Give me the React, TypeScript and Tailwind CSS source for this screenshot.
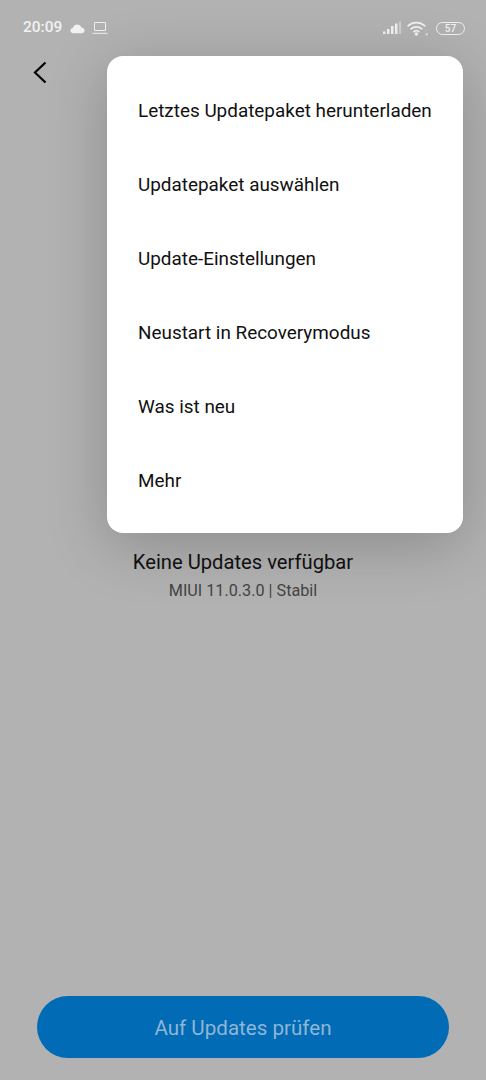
const menuItems = [
  'Letztes Updatepaket herunterladen',
  'Updatepaket auswählen',
  'Update-Einstellungen',
  'Neustart in Recoverymodus',
  'Was ist neu',
  'Mehr',
];

function CloudIcon() {
  return (
    <svg width="15" height="11" viewBox="0 0 15 11" fill="#f1f1f1">
      <path d="M3.3 10.2C1.5 10.2.4 9 .4 7.6c0-1.3 1-2.4 2.4-2.6C3.2 3 5 1.4 7.2 1.4c2 0 3.6 1.2 4.2 3.1 1.8.1 3.2 1.4 3.2 3 0 1.500-1.200 2.700-3 2.700z" />
    </svg>
  );
}

function LaptopIcon() {
  return (
    <svg width="16" height="12" viewBox="0 0 16 12" fill="none" stroke="#f1f1f1" strokeWidth="1">
      <rect x="2.500" y="0.500" width="11" height="8" rx="0.500" />
      <path d="M0.500 11.300h15" />
    </svg>
  );
}

function SignalIcon() {
  return (
    <svg width="19" height="14" viewBox="0 0 19 14" fill="#f1f1f1">
      <rect x="0" y="10.500" width="2.500" height="2.500" />
      <rect x="4" y="8" width="2.500" height="5" />
      <rect x="8" y="5" width="2.500" height="8" />
      <rect x="12" y="2.500" width="2.500" height="10.500" />
      <rect x="16" y="0.500" width="2" height="12.500" opacity="0.450" />
    </svg>
  );
}

function WifiIcon() {
  return (
    <svg width="21" height="15" viewBox="0 0 21 15" fill="none" stroke="#f1f1f1" strokeWidth="1.700" strokeLinecap="round">
      <path d="M1 4.800C5.800.6 13 .6 17.800 4.800" />
      <path d="M3.900 7.800c3.200-2.700 7.800-2.700 11 0" />
      <path d="M6.900 10.600c1.500-1.200 3.500-1.200 5 0" />
      <circle cx="9.400" cy="13" r="0.900" fill="#f1f1f1" />
      <circle cx="19.800" cy="13.400" r="0.300" fill="#f1f1f1" />
    </svg>
  );
}

function BackIcon() {
  return (
    <svg width="16" height="23" viewBox="0 0 16 23" fill="none" stroke="#000000" strokeWidth="2.200">
      <path d="M13.500 1.500 3 11.500l10.500 10" />
    </svg>
  );
}

export default function App() {
  return (
    <div className="relative flex h-[1080px] w-[486px] flex-col overflow-hidden bg-[#b2b2b2] font-['Roboto',sans-serif]">
      <div className="flex h-[56px] shrink-0 items-center justify-between pl-[23px] pr-[21px]">
        <div className="flex items-center">
          <span className="text-[15.5px] font-medium text-[#f1f1f1]">20:09</span>
          <span className="ml-[8px] flex"><CloudIcon /></span>
          <span className="ml-[7px] flex"><LaptopIcon /></span>
        </div>
        <div className="flex items-center">
          <SignalIcon />
          <span className="ml-[5px] flex"><WifiIcon /></span>
          <span className="ml-[8px] flex h-[13px] w-[29px] items-center justify-center rounded-full border border-[#f1f1f1] text-[10px] font-medium text-[#f1f1f1]">
            57
          </span>
        </div>
      </div>

      <div className="pl-[32px] pt-[5px]">
        <BackIcon />
      </div>

      <div className="mt-[464px] flex flex-col items-center">
        <p className="text-[20.2px] leading-[28px] text-[#111111]">Keine Updates verfügbar</p>
        <p className="mt-[3px] text-[16.2px] leading-[24px] text-[#444444]">MIUI 11.0.3.0 | Stabil</p>
      </div>

      <div className="mt-auto px-[37px] pb-[22px]">
        <button className="h-[62px] w-full rounded-full bg-[#016bb6] pt-[2px] text-[20.6px] text-[#8fb6d3]">
          Auf Updates prüfen
        </button>
      </div>

      <div className="absolute left-[107px] top-[56px] flex h-[477px] w-[356px] flex-col rounded-[16px] bg-white pb-[15px] pl-[31px] pt-[18.500px] shadow-[0_12px_60px_rgba(0,0,0,0.22)]">
        {menuItems.map((item) => (
          <div key={item} className="flex h-[74.2px] items-center text-[18.9px] text-[#111111]">
            {item}
          </div>
        ))}
      </div>
    </div>
  );
}
